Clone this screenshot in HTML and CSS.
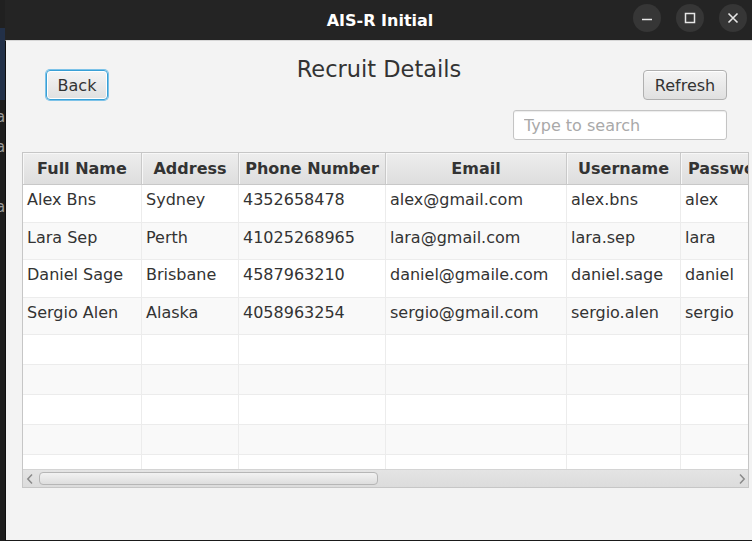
FILE: index.html
```html
<!DOCTYPE html>
<html>
<head>
<meta charset="utf-8">
<title>AIS-R Initial</title>
<link rel="stylesheet" href="styles.css">
</head>
<body>
<div class="desk">
  <div class="desk-top"></div>
  <div class="desk-blue"></div>
  <div class="desk-text">
    <div>a</div><div>a</div><div>l</div><div>a</div><div>.</div>
  </div>
</div>
<div class="window">
  <div class="titlebar">
    <div></div>
    <div class="wtitle">AIS-R Initial</div>
    <div class="wctrls">
      <span class="wbtn"><svg width="12" height="12" viewBox="0 0 12 12"><path d="M1 7.5h10" stroke="#e6e6e6" stroke-width="1.5" fill="none"/></svg></span>
      <span class="wbtn"><svg width="12" height="12" viewBox="0 0 12 12"><rect x="1.5" y="1.5" width="9" height="9" stroke="#e6e6e6" stroke-width="1.5" fill="none"/></svg></span>
      <span class="wbtn"><svg width="12" height="12" viewBox="0 0 12 12"><path d="M1.5 1.5l9 9M10.5 1.5l-9 9" stroke="#e6e6e6" stroke-width="1.6" fill="none"/></svg></span>
    </div>
  </div>
  <div class="content">
    <div class="toolbar">
      <div class="tleft"><button class="btn back">Back</button></div>
      <h1 class="ptitle">Recruit Details</h1>
      <div class="tright">
        <button class="btn refresh">Refresh</button>
        <input class="search" type="text" placeholder="Type to search">
      </div>
    </div>
    <div class="table">
      <div class="row head">
        <div class="hc">Full Name</div><div class="hc">Address</div><div class="hc">Phone Number</div><div class="hc">Email</div><div class="hc">Username</div><div class="hc hl">Password</div>
      </div>
      <div class="tbody">
        <div class="row dr odd"><div class="c">Alex Bns</div><div class="c">Sydney</div><div class="c">4352658478</div><div class="c">alex@gmail.com</div><div class="c">alex.bns</div><div class="c">alex</div></div>
        <div class="row dr even short"><div class="c">Lara Sep</div><div class="c">Perth</div><div class="c">41025268965</div><div class="c">lara@gmail.com</div><div class="c">lara.sep</div><div class="c">lara</div></div>
        <div class="row dr odd"><div class="c">Daniel Sage</div><div class="c">Brisbane</div><div class="c">4587963210</div><div class="c">daniel@gmaile.com</div><div class="c">daniel.sage</div><div class="c">daniel</div></div>
        <div class="row dr even short"><div class="c">Sergio Alen</div><div class="c">Alaska</div><div class="c">4058963254</div><div class="c">sergio@gmail.com</div><div class="c">sergio.alen</div><div class="c">sergio</div></div>
        <div class="row er odd"><div class="c"></div><div class="c"></div><div class="c"></div><div class="c"></div><div class="c"></div><div class="c"></div></div>
        <div class="row er even"><div class="c"></div><div class="c"></div><div class="c"></div><div class="c"></div><div class="c"></div><div class="c"></div></div>
        <div class="row er odd"><div class="c"></div><div class="c"></div><div class="c"></div><div class="c"></div><div class="c"></div><div class="c"></div></div>
        <div class="row er even"><div class="c"></div><div class="c"></div><div class="c"></div><div class="c"></div><div class="c"></div><div class="c"></div></div>
        <div class="row er odd"><div class="c"></div><div class="c"></div><div class="c"></div><div class="c"></div><div class="c"></div><div class="c"></div></div>
      </div>
      <div class="hscroll">
        <svg class="arr" width="8" height="12" viewBox="0 0 8 12"><path d="M6 1.5L1.8 6 6 10.5" stroke="#8a8a8a" stroke-width="1.5" fill="none"/></svg>
        <div class="track"><div class="thumb"></div></div>
        <svg class="arr" width="8" height="12" viewBox="0 0 8 12"><path d="M2 1.5L6.2 6 2 10.5" stroke="#8a8a8a" stroke-width="1.5" fill="none"/></svg>
      </div>
    </div>
  </div>
</div>
</body>
</html>
```
FILE: styles.css
```css
html, body {
  margin: 0;
  padding: 0;
}
body {
  width: 752px;
  height: 541px;
  overflow: hidden;
  display: flex;
  background: #1b1b1b;
  font-family: "DejaVu Sans", "Noto Sans", sans-serif;
}
.desk {
  width: 5px;
  flex: none;
  display: flex;
  flex-direction: column;
  overflow: hidden;
  background: #1d1d1d;
}
.desk-top {
  height: 28px;
  background: #202020;
}
.desk-blue {
  height: 72px;
  background: #223048;
}
.desk-text {
  margin-left: -4px;
  padding-top: 2px;
  font-size: 15px;
  line-height: 30px;
  color: #9a9a9a;
}
.window {
  width: 747px;
  flex: none;
  display: flex;
  flex-direction: column;
}
.titlebar {
  height: 40px;
  flex: none;
  background: #242424;
  display: grid;
  grid-template-columns: 1fr auto 1fr;
  align-items: center;
}
.wtitle {
  color: #ffffff;
  font-weight: bold;
  font-size: 16px;
  padding-top: 1px;
  padding-left: 3px;
}
.wctrls {
  display: flex;
  justify-content: flex-end;
  gap: 15px;
  padding-right: 5px;
  margin-top: -5px;
}
.wbtn {
  width: 28px;
  height: 28px;
  border-radius: 50%;
  background: #363636;
  display: flex;
  align-items: center;
  justify-content: center;
}
.content {
  flex: 1;
  background: #f3f3f3;
  border-top: 1px solid #d6d6d6;
  border-left: 1px solid #0e0e0e;
  border-bottom: 1px solid #1a1a1a;
  padding: 0 3px 0 16px;
  display: flex;
  flex-direction: column;
  min-height: 0;
}
.toolbar {
  display: grid;
  grid-template-columns: 1fr auto 1fr;
  margin: 0 22px 0 24px;
  height: 99px;
}
.tleft {
  padding-top: 29px;
}
.tright {
  padding-top: 29px;
  display: flex;
  flex-direction: column;
  align-items: flex-end;
  gap: 10px;
}
.ptitle {
  margin: 15px 15px 0 0;
  font-weight: normal;
  font-size: 22.5px;
  line-height: 26px;
  color: #333333;
}
.btn {
  font-family: "DejaVu Sans", "Noto Sans", sans-serif;
  font-size: 16px;
  color: #333333;
  height: 30px;
  padding: 0 10px;
  border-radius: 4px;
  border: 1px solid #b0b0b0;
  background: linear-gradient(#f4f4f4, #e0e0e0);
  box-shadow: inset 0 1px 0 #ffffff;
}
.back {
  width: 62px;
  border: 1px solid #39a0d6;
  box-shadow: 0 0 0 1px #7cc2e8, inset 0 0 0 1px #ffffff;
}
.refresh {
  width: 84px;
}
.search {
  box-sizing: border-box;
  width: 214px;
  height: 30px;
  border: 1px solid #c4c4c4;
  border-radius: 3px;
  background: #ffffff;
  padding: 0 10px;
  font-family: "DejaVu Sans", "Noto Sans", sans-serif;
  font-size: 16px;
  color: #333333;
  box-shadow: inset 0 1px 1px #ececec;
}
.search::placeholder {
  color: #a9a9a9;
}
.table {
  margin-top: 12px;
  width: 727px;
  height: 336px;
  box-sizing: border-box;
  border: 1px solid #c6c6c6;
  background: #ffffff;
  display: flex;
  flex-direction: column;
  overflow: hidden;
}
.row {
  display: grid;
  grid-template-columns: 119px 97px 147px 181px 114px 120px;
  flex: none;
}
.head {
  height: 32px;
  box-sizing: border-box;
  border-bottom: 1px solid #c8c8c8;
  background: linear-gradient(#ededed, #dedede);
}
.hc {
  box-sizing: border-box;
  border-right: 1px solid #c9c9c9;
  box-shadow: inset 1px 1px 0 #f7f7f7;
  font-weight: bold;
  font-size: 16px;
  color: #333333;
  text-align: center;
  line-height: 32px;
  white-space: nowrap;
  overflow: hidden;
  padding: 0 4px;
}
.hl {
  text-align: left;
  padding-left: 7px;
}
.tbody {
  flex: 1;
  min-height: 0;
  overflow: hidden;
}
.c {
  box-sizing: border-box;
  border-right: 1px solid #ececec;
  font-size: 16px;
  line-height: 20px;
  color: #333333;
  padding: 5px 0 0 4px;
  white-space: nowrap;
  overflow: hidden;
}
.dr {
  height: 38px;
  box-sizing: border-box;
  border-bottom: 1px solid #ececec;
}
.dr.short {
  height: 37px;
}
.er {
  height: 30px;
  box-sizing: border-box;
  border-bottom: 1px solid #ececec;
}
.odd {
  background: #ffffff;
}
.even {
  background: #f9f9f9;
}
.hscroll {
  flex: none;
  height: 17px;
  border-top: 1px solid #d4d4d4;
  background: linear-gradient(#e4e4e4, #dcdcdc);
  display: flex;
  align-items: center;
  padding: 0 2px 0 3px;
  gap: 5px;
}
.arr {
  flex: none;
}
.track {
  flex: 1;
  height: 13px;
}
.thumb {
  width: 339px;
  height: 13px;
  box-sizing: border-box;
  border: 1px solid #b6b6b6;
  border-radius: 4px;
  background: linear-gradient(#f2f2f2, #dedede);
}
```
